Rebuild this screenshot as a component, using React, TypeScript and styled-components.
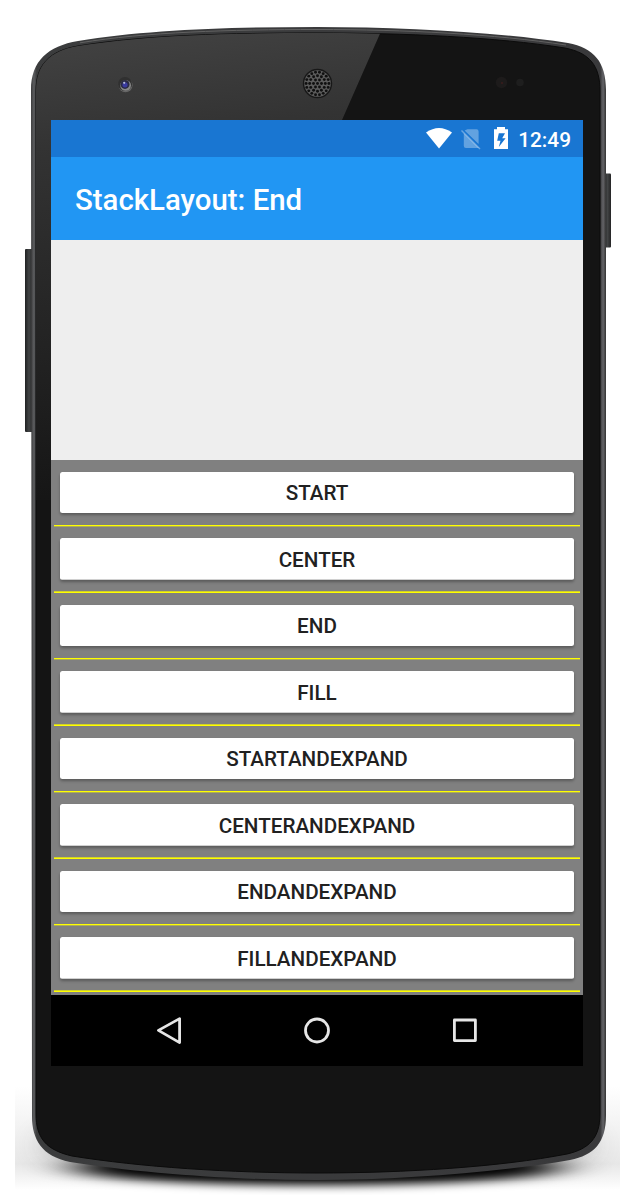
import React from "react";
import styled, { createGlobalStyle } from "styled-components";

const GlobalStyle = createGlobalStyle`
  *, *::before, *::after { box-sizing: border-box; }
  body { margin: 0; background: #fff; font-family: Roboto, sans-serif; }
`;

const Stage = styled.main`
  position: relative;
  width: 643px;
  height: 1200px;
  padding: 120px 60px 134px 51px;
  overflow: hidden;
`;

const DeviceArt = styled.svg`
  position: absolute;
  inset: 0;
`;

const Screen = styled.section`
  position: relative;
  display: flex;
  flex-direction: column;
  width: 532px;
  height: 946px;
  overflow: hidden;
`;

const StatusBar = styled.div`
  display: flex;
  align-items: center;
  justify-content: flex-end;
  height: 37px;
  padding-right: 12px;
  background: #1976d2;
  color: #fff;
`;

const Clock = styled.span`
  margin-left: 6px;
  padding-top: 3px;
  font-size: 20.8px;
  font-weight: 500;
  line-height: 37px;
`;

const AppBar = styled.header`
  display: flex;
  align-items: center;
  height: 83px;
  padding: 3px 24px 0;
  background: #2196f3;
`;

const Title = styled.h1`
  margin: 0;
  color: #fff;
  font-size: 29.4px;
  font-weight: 500;
  line-height: 40px;
`;

const Blank = styled.div`
  height: 220px;
  background: #eee;
`;

const Stack = styled.div`
  display: flex;
  flex-direction: column;
  height: 535px;
  padding: 0 3px;
  background: #808080;
`;

const Row = styled.div<{ $height: number }>`
  display: flex;
  flex-direction: column;
  justify-content: flex-end;
  flex: none;
  height: ${(p) => p.$height}px;
`;

const OptionButton = styled.button<{ $tall: boolean }>`
  height: ${(p) => (p.$tall ? 42 : 41)}px;
  margin: 0 6px ${(p) => (p.$tall ? 11 : 12)}px;
  padding: 1px 0 0;
  border: 0;
  border-radius: 2.5px;
  background: ${(p) =>
    p.$tall ? "linear-gradient(#fff 41px, #d0d0d0 41px)" : "#fff"};
  box-shadow: 0 2px 3px rgba(0, 0, 0, 0.3);
  color: #212121;
  font: 500 20.65px/40px Roboto, sans-serif;
`;

const Separator = styled.div<{ $tall: boolean }>`
  height: 2px;
  background: ${(p) =>
    p.$tall
      ? "linear-gradient(#d2d22a 50%, #ff0 50%)"
      : "linear-gradient(#ff0 50%, #aeae52 50%)"};
`;

const NavBar = styled.nav`
  display: flex;
  align-items: center;
  justify-content: center;
  gap: 108px;
  height: 71px;
  background: #000;
`;

const NavIcon = styled.svg`
  width: 40px;
  height: 40px;
  fill: none;
  stroke: #e6e6e6;
  stroke-width: 2.8;
  stroke-linejoin: round;
`;

const options = [
  { label: "START", height: 67, tall: false },
  { label: "CENTER", height: 66, tall: true },
  { label: "END", height: 67, tall: false },
  { label: "FILL", height: 66, tall: true },
  { label: "STARTANDEXPAND", height: 67, tall: false },
  { label: "CENTERANDEXPAND", height: 66, tall: true },
  { label: "ENDANDEXPAND", height: 67, tall: false },
  { label: "FILLANDEXPAND", height: 66, tall: true },
];

const SHELL =
  "M31 90 C31 61 48 46 78 41 C145 30 230 27 317 27 C405 27 495 32 568 43 C594 48 606 62 606 90 L606 1115 C606 1143 594 1155 570 1160 C500 1172 405 1180 317 1180 C230 1180 140 1173 70 1162 C42 1156 32 1140 32 1116 Z";
const FACE =
  "M36 91 C36 65 49 51 78 46 C145 35 230 33 317 33 C405 33 495 37 565 48 C590 53 600 66 600 91 L600 1114 C600 1138 589 1149 567 1154 C500 1167 405 1173 317 1173 C230 1173 140 1167 72 1156 C46 1150 36 1138 36 1114 Z";

function grilleHoles() {
  const holes: React.ReactElement[] = [];
  [0, 4, 7.8, 11.4].forEach((radius, ring) => {
    const count = ring === 0 ? 1 : ring * 6;
    for (let i = 0; i < count; i++) {
      const angle = (i / count) * Math.PI * 2;
      holes.push(
        <circle
          key={`${ring}-${i}`}
          cx={317.5 + radius * Math.cos(angle)}
          cy={83.5 + radius * Math.sin(angle)}
          r="1.45"
        />
      );
    }
  });
  return holes;
}

function Device() {
  return (
    <DeviceArt width="643" height="1200" viewBox="0 0 643 1200" aria-hidden="true">
      <defs>
        <linearGradient id="shell" x1="0" x2="1" y1="0" y2="0">
          <stop offset="0" stopColor="#3a3a3b" />
          <stop offset="0.005" stopColor="#5c5d5f" />
          <stop offset="0.01" stopColor="#3b3c3d" />
          <stop offset="0.99" stopColor="#39393b" />
          <stop offset="0.995" stopColor="#646468" />
          <stop offset="1" stopColor="#333" />
        </linearGradient>
        <linearGradient id="gloss" gradientUnits="userSpaceOnUse" x1="160" y1="40" x2="215" y2="500">
          <stop offset="0" stopColor="#404040" />
          <stop offset="0.2" stopColor="#333" />
          <stop offset="0.65" stopColor="#222" />
          <stop offset="1" stopColor="#141414" />
        </linearGradient>
        <linearGradient id="key" x1="0" x2="1" y1="0" y2="0">
          <stop offset="0" stopColor="#202122" />
          <stop offset="0.5" stopColor="#424445" />
          <stop offset="1" stopColor="#242425" />
        </linearGradient>
        <linearGradient id="sideShade" x1="0" x2="0" y1="0" y2="1">
          <stop offset="0" stopColor="#888" stopOpacity="0" />
          <stop offset="0.75" stopColor="#888" stopOpacity="0.2" />
          <stop offset="1" stopColor="#888" stopOpacity="0" />
        </linearGradient>
        <filter id="soft" x="-20%" y="-100%" width="140%" height="300%">
          <feGaussianBlur stdDeviation="24 5" />
        </filter>
        <filter id="wide" x="-20%" y="-100%" width="140%" height="300%">
          <feGaussianBlur stdDeviation="16 12" />
        </filter>
        <clipPath id="shadowArea">
          <rect x="15" y="1080" width="605" height="115" />
        </clipPath>
        <clipPath id="wideArea">
          <rect x="15" y="1080" width="605" height="101" />
        </clipPath>
        <clipPath id="faceArea">
          <path d={FACE} />
        </clipPath>
      </defs>

      <g clipPath="url(#shadowArea)">
        <rect x="15" y="1086" width="605" height="104" fill="url(#sideShade)" />
        <g clipPath="url(#wideArea)">
          <ellipse cx="317" cy="1145" rx="272" ry="28" fill="#444" opacity="0.55" filter="url(#wide)" />
        </g>
        <ellipse cx="317" cy="1168" rx="242" ry="17" fill="#000" filter="url(#soft)" />
      </g>
      <rect x="25" y="249" width="8" height="183" rx="1" fill="url(#key)" />
      <rect x="604" y="173.5" width="7" height="74" rx="1" fill="url(#key)" />
      <path d={SHELL} fill="url(#shell)" />
      <path d={FACE} fill="#141414" stroke="#0b0b0b" strokeWidth="1" />
      <path d="M30 20 H386 L342 120 L180 500 H30 Z" fill="url(#gloss)" clipPath="url(#faceArea)" />
      <path d="M80 42.8 C145 32 230 29.5 317 29.5 C405 29.5 495 34 566 45" fill="none" stroke="#626262" strokeWidth="1" />

      <circle cx="125.5" cy="85.3" r="7" fill="#666" />
      <circle cx="125" cy="84" r="7" fill="#303030" />
      <circle cx="125.6" cy="85.4" r="5.4" fill="#888" />
      <circle cx="125" cy="84.4" r="4.5" fill="#2b2b45" />
      <circle cx="125" cy="84.8" r="2.6" fill="#3a3aa0" />
      <circle cx="124.2" cy="82.8" r="1.1" fill="#b4bad8" />
      <circle cx="317.5" cy="83.5" r="14" fill="#5c5c5c" stroke="#181818" strokeWidth="1.4" />
      <g fill="#101010">{grilleHoles()}</g>
      <circle cx="501.5" cy="82.5" r="5.7" fill="#1d1b1b" />
      <circle cx="502" cy="83" r="1" fill="#3b1c1c" />
      <circle cx="520" cy="82.5" r="3.8" fill="#1e1e1e" />
    </DeviceArt>
  );
}

export default function App() {
  return (
    <>
      <GlobalStyle />
      <Stage>
        <Device />
        <Screen>
          <StatusBar>
            <svg width="86" height="37" viewBox="0 0 86 37" fill="#fff" aria-hidden="true">
              <path d="M0 12.6 Q13 3.4 26 12.6 L13 28.6 Z" />
              <path
                d="M41.5 9.3 L50.5 9.3 Q52.6 9.3 52.6 11.5 V24 L38.6 10.5 Z M37.8 13 L53 28 H40 Q37.8 28 37.8 25.8 Z"
                opacity="0.32"
              />
              <path d="M35.5 10.5 L54 29" stroke="#fff" strokeWidth="1.5" opacity="0.35" />
              <path
                fillRule="evenodd"
                d="M71 7 H79 V9.2 H82 V29 H68 V9.2 H71 Z M72.8 13.2 L71.2 20.7 H74.5 L72.8 27 L79.6 18.3 H76.2 L79 13.2 Z"
              />
            </svg>
            <Clock>12:49</Clock>
          </StatusBar>
          <AppBar>
            <Title>StackLayout: End</Title>
          </AppBar>
          <Blank />
          <Stack>
            {options.map((o) => (
              <Row key={o.label} $height={o.height}>
                <OptionButton $tall={o.tall}>{o.label}</OptionButton>
                <Separator $tall={o.tall} />
              </Row>
            ))}
          </Stack>
          <NavBar>
            <NavIcon viewBox="0 0 40 40" aria-label="Back">
              <path d="M9.4 19.4 L30.6 7.6 V31.6 Z" />
            </NavIcon>
            <NavIcon viewBox="0 0 40 40" aria-label="Home">
              <circle cx="20" cy="19.5" r="11.5" />
            </NavIcon>
            <NavIcon viewBox="0 0 40 40" aria-label="Recent apps">
              <rect x="9.4" y="9" width="21" height="20.6" />
            </NavIcon>
          </NavBar>
        </Screen>
      </Stage>
    </>
  );
}
